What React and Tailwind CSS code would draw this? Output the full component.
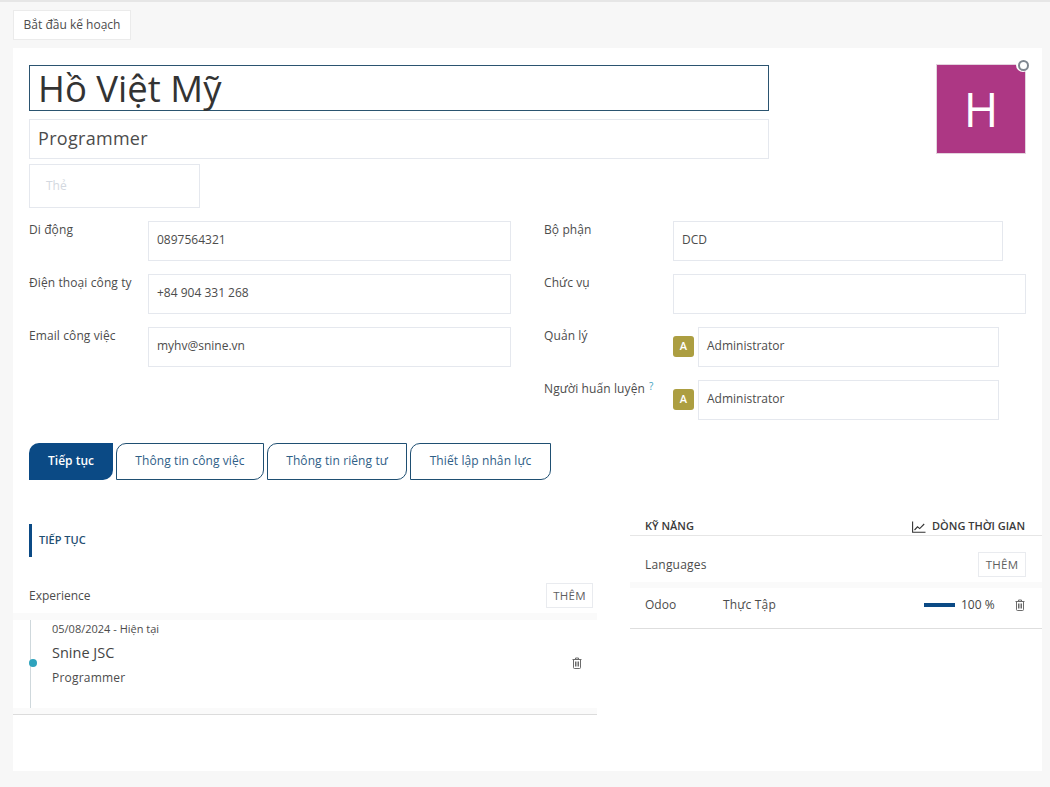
import React from 'react';

const inputBase = 'h-[40px] border border-[#e5e8ee] flex items-center px-2 pb-[2px] text-[12px] text-[#4c4c4c]';
const labelBase = 'shrink-0 text-[12px] leading-[17px] text-[#4c4c4c] tracking-[0.1px]';

const Field = ({ label, value, width }) => (
  <div className="flex h-[40px]">
    <div className={`${labelBase} w-[119px]`}>{label}</div>
    <div className={`${inputBase} ${width}`}>{value}</div>
  </div>
);

const UserRow = ({ label, value, width }) => (
  <div className="flex h-[40px]">
    <div className={`${labelBase} w-[129px]`}>{label}</div>
    <div className={`${inputBase} ${width}`}>{value}</div>
  </div>
);

const UserField = ({ label, value, help }) => (
  <div className="flex h-[40px]">
    <div className={`${labelBase} w-[129px]`}>
      {label}
      {help && <sup className="relative -top-[3px] text-[10px] text-[#3f9fc0] ml-[4px]">?</sup>}
    </div>
    <div className="w-[21px] h-[21px] mt-[9px] mr-[4px] rounded-[3px] bg-[#ac9e41] text-white text-[11px] font-semibold flex items-center justify-center">
      A
    </div>
    <div className={`${inputBase} w-[301px]`}>{value}</div>
  </div>
);

const TrashIcon = () => (
  <svg width="10" height="12" viewBox="0 0 10 12" fill="none" stroke="#6b6b6b" strokeWidth="1">
    <path d="M0.5 2.5h9M3.5 2.5V1h3v1.5M1.5 2.5v8.2c0 .4.3.8.8.8h5.4c.5 0 .8-.4.8-.8V2.5M3.5 4.5v5M5 4.5v5M6.5 4.5v5" />
  </svg>
);

const ChartIcon = () => (
  <svg width="14" height="12" viewBox="0 0 14 12" fill="none" stroke="#333" strokeWidth="1.1">
    <path d="M0.6 0.5v10.8h12.9" />
    <path d="M2.5 9l3-3.2 2.2 1.8 4.5-4.6" />
  </svg>
);

const Tab = ({ label, width, active }) => (
  <div
    className={`h-[37px] pb-[1px] flex items-center justify-center text-[12px] rounded-tl-[10px] rounded-br-[10px] ${width} ${
      active
        ? 'bg-[#0b4a85] text-white font-semibold'
        : 'bg-white border border-[#1f4f72] text-[#2f6087] tracking-[0.1px]'
    }`}
  >
    {label}
  </div>
);

const AddButton = ({ width }) => (
  <div className={`${width} h-[25px] border border-[#e9ebef] text-[11.5px] text-[#5f5f5f] flex items-center justify-center tracking-[0.3px]`}>
    THÊM
  </div>
);

export default function App() {
  return (
    <div
      className="w-[1050px] h-[787px] overflow-hidden bg-[#f7f7f7] border-t-2 border-[#e6e6e6] text-[#4c4c4c]"
      style={{ fontFamily: '"Open Sans", sans-serif' }}
    >
      <div className="pl-[13px] pt-[8px]">
        <div className="w-[118px] h-[30px] bg-white border border-[#ebebeb] text-[12px] text-[#4c4c4c] flex items-center justify-center">
          Bắt đầu kế hoạch
        </div>
      </div>

      <div className="relative mt-[8px] ml-[13px] w-[1029px] h-[723px] bg-white">
        {/* Header */}
        <div className="flex justify-between pt-[17px] pl-[16px] pr-[16px]">
          <div className="w-[740px]">
            <div className="h-[46px] border border-[#2b5470] flex items-center px-[8px] text-[36.5px] leading-none text-[#333]">
              Hồ Việt Mỹ
            </div>
            <div className="h-[40px] mt-[8px] pb-[2px] border border-[#e5e8ee] flex items-center px-[8px] text-[18px] text-[#4c4c4c] tracking-[0.3px]">
              Programmer
            </div>
            <div className="w-[171px] h-[44px] mt-[5px] border border-[#e5e8ee] flex items-center px-[16px] text-[12px] text-[#d3d8e0]">
              Thẻ
            </div>
          </div>
          <div className="relative w-[90px] h-[90px] -mt-[1px] bg-[#ad3784] border border-[#e3d3de] text-white text-[47px] flex items-center justify-center">
            H
            <div className="absolute -top-[7px] -right-[5px] w-[14px] h-[14px] rounded-full bg-white flex items-center justify-center">
              <div className="w-[11px] h-[11px] rounded-full border-2 border-[#7f8790] bg-white" />
            </div>
          </div>
        </div>

        {/* Fields */}
        <div className="flex pl-[16px] mt-[13px]">
          <div className="w-[515px] flex flex-col gap-[13px]">
            <Field label="Di động" value="0897564321" width="w-[363px]" />
            <Field label="Điện thoại công ty" value="+84 904 331 268" width="w-[363px]" />
            <Field label="Email công việc" value="myhv@snine.vn" width="w-[363px]" />
          </div>
          <div className="flex flex-col gap-[13px]">
            <UserRow label="Bộ phận" value="DCD" width="w-[330px]" />
            <UserRow label="Chức vụ" value="" width="w-[353px]" />
            <UserField label="Quản lý" value="Administrator" />
            <UserField label="Người huấn luyện" value="Administrator" help />
          </div>
        </div>

        {/* Tabs */}
        <div className="flex gap-[3px] pl-[16px] mt-[23px]">
          <Tab label="Tiếp tục" width="w-[84px]" active />
          <Tab label="Thông tin công việc" width="w-[148px]" />
          <Tab label="Thông tin riêng tư" width="w-[140px]" />
          <Tab label="Thiết lập nhân lực" width="w-[141px]" />
        </div>

        <div className="flex mt-[37px]">
          {/* Resume */}
          <div className="w-[584px] shrink-0">
            <div className="ml-[16px] mt-[7px] h-[33px] border-l-[3px] border-[#0b4a85] pl-[7px] flex items-center text-[11px] font-semibold text-[#1f4f72]">
              TIẾP TỤC
            </div>
            <div className="flex items-center justify-between pl-[16px] pr-[4px] mt-[26px] h-[25px] text-[12px]">
              <span>Experience</span>
              <AddButton width="w-[47px]" />
            </div>
            <div className="h-[7px] mt-[5px] bg-[#fafafa]" />
            <div className="relative h-[88px] pl-[39px] pr-[15px] pb-[2px] flex items-center justify-between">
              <div className="absolute left-[17px] top-0 bottom-0 w-px bg-[#cfd8dc]" />
              <div className="absolute left-[16px] top-[39px] w-[8px] h-[8px] rounded-full bg-[#2ea3bd]" />
              <div className="self-start pt-[1px]">
                <div className="text-[11px] leading-[15px] text-[#4c4c4c]">05/08/2024 - Hiện tại</div>
                <div className="text-[14.5px] leading-[20px] mt-[7px] text-[#444]">Snine JSC</div>
                <div className="text-[12px] leading-[16px] mt-[7px] tracking-[0.2px]">Programmer</div>
              </div>
              <TrashIcon />
            </div>
            <div className="h-[7px] bg-[#fafafa] border-b border-[#dcdcdc]" />
          </div>

          {/* Skills */}
          <div className="ml-[33px] flex-1">
            <div className="h-[19px] pt-[1px] pl-[15px] pr-[17px] flex items-center justify-between text-[11px] font-semibold text-[#3a3a3a] border-b border-[#e6e6e6]">
              <span>KỸ NĂNG</span>
              <span className="flex items-center gap-[6px]">
                <ChartIcon />
                DÒNG THỜI GIAN
              </span>
            </div>
            <div className="flex items-center justify-between pl-[15px] pr-[16px] mt-[16px] h-[25px] text-[12px] tracking-[0.2px]">
              <span>Languages</span>
              <AddButton width="w-[48px]" />
            </div>
            <div className="h-[6px] mt-[5px] bg-[#fafafa]" />
            <div className="h-[41px] pb-[7px] flex items-center pl-[15px] pr-[17px] text-[12px] border-b border-[#dedede]">
              <span className="w-[78px]">Odoo</span>
              <span className="flex-1 tracking-[0.2px]">Thực Tập</span>
              <div className="w-[31px] h-[4px] bg-[#0b4a85]" />
              <span className="ml-[6px] w-[44px] text-[#444] font-medium text-[12px]">100 %</span>
              <span className="ml-[10px] flex"><TrashIcon /></span>
            </div>
          </div>
        </div>
      </div>
    </div>
  );
}
